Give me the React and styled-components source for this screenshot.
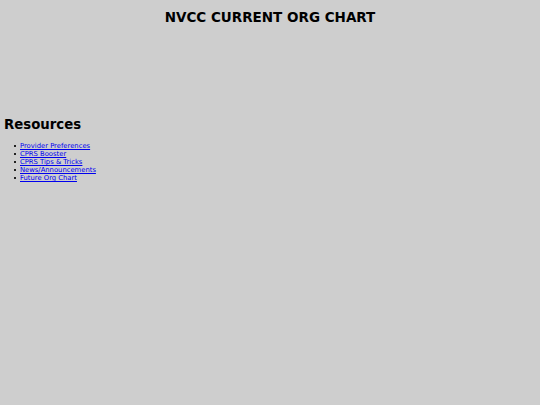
import React from "react";
import styled, { createGlobalStyle } from "styled-components";

const Global = createGlobalStyle`
  html, body {
    margin: 0;
    background: #cecece;
    font-family: "DejaVu Sans", sans-serif;
  }
`;

const Page = styled.div`
  padding: 0 4px;
`;

const Title = styled.h1`
  margin: 0;
  padding-top: 9px;
  text-align: center;
  font-size: 13.5px;
  line-height: 17px;
  font-weight: bold;
  color: #000;
`;

const Chart = styled.div`
  height: 89px;
`;

const Heading = styled.h2`
  margin: 0 0 8px;
  font-size: 13.3px;
  line-height: 19px;
  font-weight: bold;
  color: #000;
`;

const List = styled.ul`
  margin: 0;
  padding-left: 16px;
  list-style: none;
  font-size: 6.8px;
  line-height: 8px;
`;

const Item = styled.li`
  position: relative;
  &::before {
    content: "";
    position: absolute;
    left: -6px;
    top: 3px;
    width: 2px;
    height: 2px;
    background: #222;
  }
  a {
    color: #0000ee;
  }
`;

const links = [
  "Provider Preferences",
  "CPRS Booster",
  "CPRS Tips & Tricks",
  "News/Announcements",
  "Future Org Chart",
];

export default function App() {
  return (
    <Page>
      <Global />
      <Title>NVCC CURRENT ORG CHART</Title>
      <Chart />
      <Heading>Resources</Heading>
      <List>
        {links.map((l) => (
          <Item key={l}>
            <a href="#">{l}</a>
          </Item>
        ))}
      </List>
    </Page>
  );
}
